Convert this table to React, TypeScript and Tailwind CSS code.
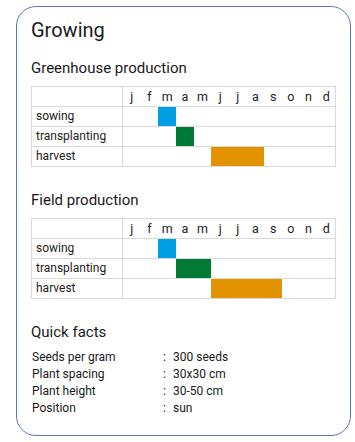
const months = ["j", "f", "m", "a", "m", "j", "j", "a", "s", "o", "n", "d"];

type Bar = { label: string; start: number; span: number; color: string };

const greenhouse: Bar[] = [
  { label: "sowing", start: 2, span: 1, color: "bg-[#009fe3]" },
  { label: "transplanting", start: 3, span: 1, color: "bg-[#007b36]" },
  { label: "harvest", start: 5, span: 3, color: "bg-[#e49300]" },
];

const field: Bar[] = [
  { label: "sowing", start: 2, span: 1, color: "bg-[#009fe3]" },
  { label: "transplanting", start: 3, span: 2, color: "bg-[#007b36]" },
  { label: "harvest", start: 5, span: 4, color: "bg-[#e49300]" },
];

const facts = [
  ["Seeds per gram", "300 seeds"],
  ["Plant spacing", "30x30 cm"],
  ["Plant height", "30-50 cm"],
  ["Position", "sun"],
];

function Calendar({ rows }: { rows: Bar[] }) {
  return (
    <div className="w-[305px] border-t border-l border-[#d9d9d9] text-[12px] text-[#222]">
      <div className="flex h-5 border-b border-[#d9d9d9]">
        <div className="w-[91px] border-r border-[#d9d9d9]" />
        <div className="grid flex-1 grid-cols-12 border-r border-[#d9d9d9]">
          {months.map((m, i) => (
            <span key={i} className="text-center text-[12.5px] leading-5">
              {m}
            </span>
          ))}
        </div>
      </div>
      {rows.map((r) => (
        <div key={r.label} className="flex h-5 border-b border-[#d9d9d9]">
          <div className="w-[91px] border-r border-[#d9d9d9] pl-[4px] leading-[19px]">{r.label}</div>
          <div className="grid flex-1 grid-cols-12 border-r border-[#d9d9d9]">
            <div
              className={r.color}
              style={{ gridColumn: `${r.start + 1} / span ${r.span}` }}
            />
          </div>
        </div>
      ))}
    </div>
  );
}

export default function App() {
  return (
    <div className="bg-white pt-[6px] pl-4 font-['Roboto',sans-serif] text-[#1a1a1a]">
      <div className="h-[430px] w-[335px] rounded-[20px] border border-[#5b79b8] px-[14px]">
        <h1 className="mt-[11px] text-[20px] leading-6">Growing</h1>

        <h2 className="mt-[16px] text-[15px] leading-5">Greenhouse production</h2>
        <div className="mt-[8px]">
          <Calendar rows={greenhouse} />
        </div>

        <h2 className="mt-[23px] text-[15px] leading-5">Field production</h2>
        <div className="mt-[8px]">
          <Calendar rows={field} />
        </div>

        <h2 className="mt-[23px] text-[15px] leading-5">Quick facts</h2>
        <div className="mt-[7px] pl-px text-[12px]">
          {facts.map(([k, v]) => (
            <div key={k} className="flex leading-[17px]">
              <span className="w-[131px]">{k}</span>
              <span className="w-[10px]">:</span>
              <span>{v}</span>
            </div>
          ))}
        </div>
      </div>
    </div>
  );
}
